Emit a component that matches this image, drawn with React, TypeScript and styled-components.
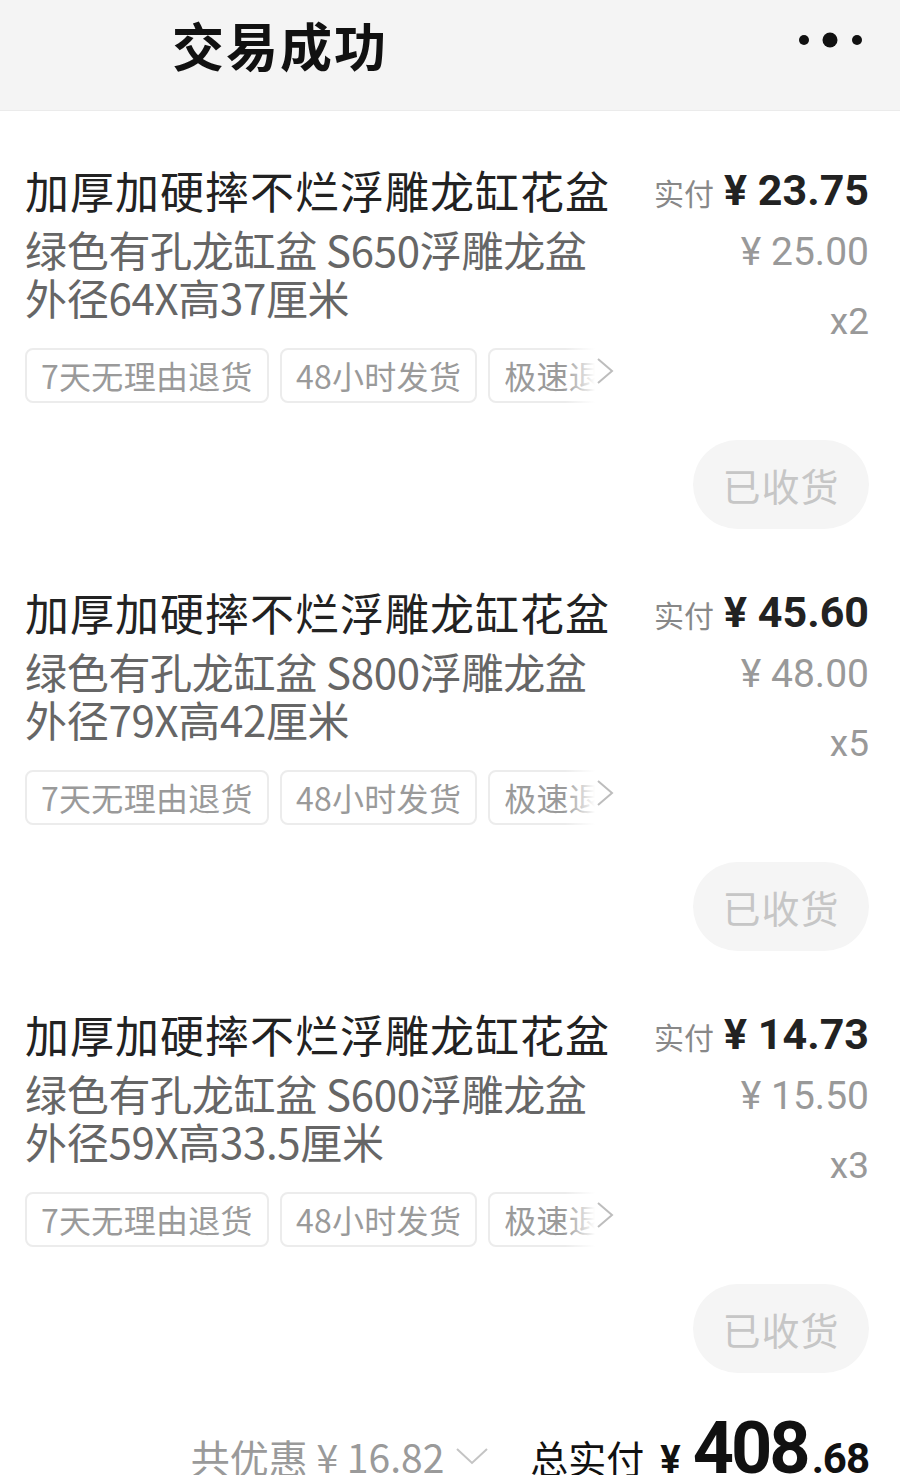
import React from "react";
import styled, { createGlobalStyle } from "styled-components";

const GlobalStyle = createGlobalStyle`
  html, body {
    margin: 0;
    padding: 0;
    background: #ffffff;
    font-family: "Noto Sans CJK SC", "Noto Sans", Roboto, sans-serif;
  }
`;

type OrderItem = {
  spec: string;
  size: string;
  paid: string;
  price: string;
  count: number;
};

const items: OrderItem[] = [
  { spec: "绿色有孔龙缸盆 S650浮雕龙盆", size: "外径64X高37厘米", paid: "23.75", price: "25.00", count: 2 },
  { spec: "绿色有孔龙缸盆 S800浮雕龙盆", size: "外径79X高42厘米", paid: "45.60", price: "48.00", count: 5 },
  { spec: "绿色有孔龙缸盆 S600浮雕龙盆", size: "外径59X高33.5厘米", paid: "14.73", price: "15.50", count: 3 },
];

const tags = ["7天无理由退货", "48小时发货", "极速退款"];

const App: React.FC = () => {
  return (
    <>
      <GlobalStyle />
      <Page>
        <Header>
          <HeaderTitle>交易成功</HeaderTitle>
          <MoreIcon width="70" height="24" viewBox="0 0 70 24">
            <circle cx="8" cy="12" r="5" fill="#111" />
            <circle cx="34" cy="12" r="7.5" fill="#111" />
            <circle cx="61" cy="12" r="5" fill="#111" />
          </MoreIcon>
        </Header>

        <ItemList>
          {items.map((item, i) => (
            <Item key={i}>
              <ItemMain>
                <Info>
                  <Title>加厚加硬摔不烂浮雕龙缸花盆</Title>
                  <Spec>
                    {item.spec}
                    <br />
                    {item.size}
                  </Spec>
                  <TagRow>
                    {tags.map((tag) => (
                      <Tag key={tag}>{tag}</Tag>
                    ))}
                    <TagMore>
                      <svg width="20" height="30" viewBox="0 0 20 30">
                        <path d="M3 3 L17 15 L3 27" fill="none" stroke="#bdbdbd" strokeWidth="2" />
                      </svg>
                    </TagMore>
                  </TagRow>
                </Info>
                <PriceCol>
                  <PaidLine>
                    <PaidLabel>实付</PaidLabel>
                    <PaidValue>¥ {item.paid}</PaidValue>
                  </PaidLine>
                  <OrigPrice>¥ {item.price}</OrigPrice>
                  <Count>x{item.count}</Count>
                </PriceCol>
              </ItemMain>
              <ActionRow>
                <ReceivedButton>已收货</ReceivedButton>
              </ActionRow>
            </Item>
          ))}
        </ItemList>

        <Footer>
          <Discount>
            共优惠 ¥ 16.82
            <svg width="36" height="20" viewBox="0 0 36 20">
              <path d="M3 3 L18 17 L33 3" fill="none" stroke="#c4c4c4" strokeWidth="2" />
            </svg>
          </Discount>
          <Total>
            <TotalLabel>总实付</TotalLabel>
            <TotalYen>¥</TotalYen>
            <TotalInt>408</TotalInt>
            <TotalDec>.68</TotalDec>
          </Total>
        </Footer>
      </Page>
    </>
  );
};

const Page = styled.div`
  width: 900px;
  background: #ffffff;
`;

const Header = styled.div`
  height: 111px;
  background: #f4f4f4;
  border-bottom: 1px solid #ebebeb;
  display: flex;
  align-items: center;
  justify-content: space-between;
  padding: 0 32px 0 172px;
  box-sizing: border-box;
`;

const HeaderTitle = styled.div`
  font-size: 52px;
  font-weight: 700;
  color: #111;
  line-height: 1;
  margin-top: -20px;
  letter-spacing: 2px;
`;

const MoreIcon = styled.svg`
  margin-top: -30px;
  margin-right: 2px;
`;

const ItemList = styled.div`
  display: flex;
  flex-direction: column;
  gap: 55px;
  padding-top: 51px;
`;

const Item = styled.div`
  display: flex;
  flex-direction: column;
  padding: 0 31px 0 25px;
`;

const ItemMain = styled.div`
  display: flex;
  justify-content: space-between;
`;

const Info = styled.div`
  width: 590px;
  display: flex;
  flex-direction: column;
`;

const Title = styled.div`
  font-size: 44px;
  line-height: 56px;
  color: #222;
  white-space: nowrap;
  letter-spacing: 1px;
`;

const Spec = styled.div`
  margin-top: 7px;
  font-size: 42px;
  line-height: 48px;
  letter-spacing: -0.3px;
  color: #666;
`;

const TagRow = styled.div`
  position: relative;
  margin-top: 27px;
  display: flex;
  gap: 11px;
  overflow: hidden;
  white-space: nowrap;
`;

const Tag = styled.div`
  flex: 0 0 auto;
  height: 55px;
  box-sizing: border-box;
  padding: 0 14px;
  border: 2px solid #ececec;
  border-radius: 8px;
  font-size: 32px;
  line-height: 51px;
  letter-spacing: 0.3px;
  color: #9a9a9a;
`;

const TagMore = styled.div`
  position: absolute;
  right: 0;
  top: 0;
  height: 55px;
  width: 50px;
  display: flex;
  align-items: flex-start;
  justify-content: flex-end;
  padding-top: 8px;
  box-sizing: border-box;
  background: linear-gradient(to right, rgba(255, 255, 255, 0), #fff 60%);
`;

const PriceCol = styled.div`
  display: flex;
  flex-direction: column;
  align-items: flex-end;
`;

const PaidLine = styled.div`
  display: flex;
  align-items: baseline;
  gap: 10px;
  line-height: 56px;
`;

const PaidLabel = styled.span`
  font-size: 30px;
  color: #888;
`;

const PaidValue = styled.span`
  font-family: Roboto, "Noto Sans CJK SC", sans-serif;
  font-size: 43px;
  font-weight: 700;
  color: #222;
`;

const OrigPrice = styled.div`
  margin-top: 8px;
  font-family: Roboto, "Noto Sans CJK SC", sans-serif;
  font-size: 39px;
  line-height: 48px;
  color: #999;
`;

const Count = styled.div`
  margin-top: 22px;
  font-family: Roboto, sans-serif;
  font-size: 37px;
  line-height: 48px;
  color: #999;
`;

const ActionRow = styled.div`
  display: flex;
  justify-content: flex-end;
  margin-top: 37px;
`;

const ReceivedButton = styled.div`
  width: 176px;
  height: 89px;
  border-radius: 45px;
  background: #f5f5f5;
  color: #c6c6c6;
  font-size: 38px;
  display: flex;
  align-items: center;
  justify-content: center;
  letter-spacing: 1px;
`;

const Footer = styled.div`
  display: flex;
  justify-content: flex-end;
  align-items: baseline;
  gap: 40px;
  padding: 40px 31px 40px 0;
`;

const Discount = styled.div`
  font-family: "Noto Sans CJK SC", Roboto, sans-serif;
  font-size: 39px;
  color: #9a9a9a;
  display: flex;
  align-items: center;
  gap: 10px;
`;

const Total = styled.div`
  display: flex;
  align-items: baseline;
  color: #111;
`;

const TotalLabel = styled.span`
  font-size: 38px;
  margin-right: 16px;
`;

const TotalYen = styled.span`
  font-family: Roboto, sans-serif;
  font-size: 38px;
  font-weight: 700;
  margin-right: 12px;
`;

const TotalInt = styled.span`
  font-family: Roboto, sans-serif;
  font-size: 72px;
  font-weight: 700;
  letter-spacing: -3px;
  line-height: 1;
`;

const TotalDec = styled.span`
  font-family: Roboto, sans-serif;
  font-size: 42px;
  font-weight: 700;
  letter-spacing: -1px;
  margin-left: 4px;
`;

export default App;
